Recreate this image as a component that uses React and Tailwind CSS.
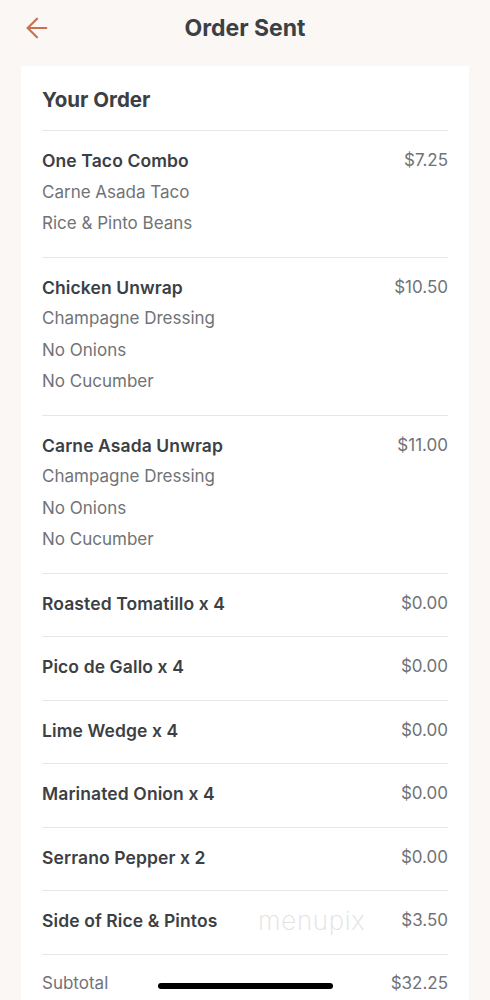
import { ArrowLeft } from "lucide-react";

const items = [
  { name: "One Taco Combo", price: "$7.25", mods: ["Carne Asada Taco", "Rice & Pinto Beans"] },
  { name: "Chicken Unwrap", price: "$10.50", mods: ["Champagne Dressing", "No Onions", "No Cucumber"] },
  { name: "Carne Asada Unwrap", price: "$11.00", mods: ["Champagne Dressing", "No Onions", "No Cucumber"] },
  { name: "Roasted Tomatillo x 4", price: "$0.00", mods: [] },
  { name: "Pico de Gallo x 4", price: "$0.00", mods: [] },
  { name: "Lime Wedge x 4", price: "$0.00", mods: [] },
  { name: "Marinated Onion x 4", price: "$0.00", mods: [] },
  { name: "Serrano Pepper x 2", price: "$0.00", mods: [] },
  { name: "Side of Rice & Pintos", price: "$3.50", mods: [], mark: true },
];

function OrderRow({ item }) {
  return (
    <div className="relative flex justify-between border-b border-[#e6e6e6] pt-[14px] pb-[17px]">
      <div>
        <div className="text-[17.5px] leading-[31.5px] font-semibold tracking-[0.1px] text-[#3c3f44]">{item.name}</div>
        {item.mods.map((m) => (
          <div key={m} className="text-[17px] leading-[31.5px] text-[#707377]">
            {m}
          </div>
        ))}
      </div>
      <div className="text-[17px] leading-[31.5px] text-[#707377]">{item.price}</div>
      {item.mark && (
        <div className="absolute left-[216px] top-[10px] text-[26px] font-extralight tracking-wide text-[#e2e2e2]">
          menupix
        </div>
      )}
    </div>
  );
}

export default function App() {
  return (
    <div className="relative h-[1000px] overflow-hidden bg-[#faf7f5] font-['Inter',sans-serif]">
      <div className="relative flex h-[57px] items-center justify-center">
        <ArrowLeft className="absolute left-[21px] top-[12px] text-[#c9714f]" size={32} strokeWidth={1.6} />
        <h1 className="text-[23px] font-bold text-[#3c3f44]">Order Sent</h1>
      </div>
      <div className="mx-[21px] mt-[9px] bg-white px-[21px]">
        <div className="border-b border-[#e6e6e6] pt-[18px] pb-[15px] text-[20.5px] font-bold leading-[31px] text-[#3c3f44]">
          Your Order
        </div>
        {items.map((it) => (
          <OrderRow key={it.name} item={it} />
        ))}
        <div className="flex justify-between pt-[13px] pb-[18px] text-[17px] leading-[31.5px] text-[#707377]">
          <span>Subtotal</span>
          <span>$32.25</span>
        </div>
      </div>
      <div className="absolute left-[158px] top-[983px] h-[6px] w-[175px] rounded-full bg-black" />
    </div>
  );
}
